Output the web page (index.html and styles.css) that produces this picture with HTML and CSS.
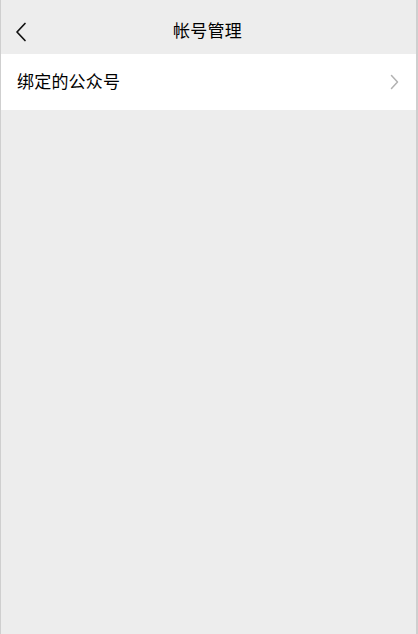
FILE: index.html
```html
<!DOCTYPE html>
<html lang="zh-CN">
<head>
<meta charset="utf-8">
<title>帐号管理</title>
<link rel="stylesheet" href="styles.css">
</head>
<body>
<div class="page">
  <header class="navbar">
    <span class="back">
      <svg width="12" height="20" viewBox="0 0 12 20"><path d="M10 1.5 L2 10 L10 18.5" fill="none" stroke="#111" stroke-width="1.7" stroke-linecap="round" stroke-linejoin="round"/></svg>
    </span>
    <h1 class="title">帐号管理</h1>
  </header>
  <div class="list">
    <div class="cell">
      <span class="cell-label">绑定的公众号</span>
      <svg class="chevron" width="9" height="16" viewBox="0 0 9 16"><path d="M1.5 1.5 L7.5 8 L1.5 14.5" fill="none" stroke="#b2b2b2" stroke-width="1.5" stroke-linecap="round" stroke-linejoin="round"/></svg>
    </div>
  </div>
</div>
</body>
</html>
```
FILE: styles.css
```css
html, body {
  margin: 0;
  padding: 0;
  height: 100%;
}
body {
  background: #ededed;
  font-family: "Noto Sans CJK SC", "Noto Sans", sans-serif;
  color: #000;
}
.page {
  min-height: 100%;
  box-sizing: border-box;
  border-left: 1px solid #cfcfcf;
  border-right: 2px solid #cfcfcf;
  background: #ededed;
}
.navbar {
  height: 54px;
  display: flex;
  align-items: center;
  justify-content: center;
  position: relative;
}
.back {
  position: absolute;
  left: 14px;
  top: 22px;
  display: flex;
}
.title {
  margin: 0 2px 0 0;
  font-size: 17px;
  font-weight: 400;
  letter-spacing: 0.3px;
  padding-top: 4px;
}
.list {
  background: #fff;
}
.cell {
  height: 56px;
  box-sizing: border-box;
  display: flex;
  align-items: center;
  justify-content: space-between;
  padding: 0 17px 3px 16px;
}
.cell-label {
  font-size: 17px;
  font-weight: 400;
  letter-spacing: 0.2px;
}
.chevron {
  display: block;
  margin-top: 3px;
}
```
